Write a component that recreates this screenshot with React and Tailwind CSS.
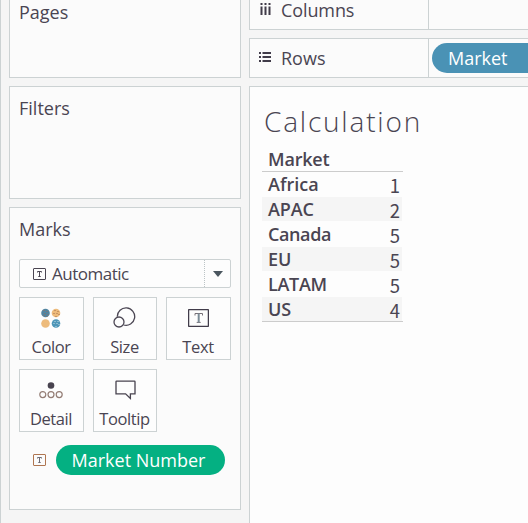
import React from 'react';

const rows = [
  ['Africa', 1, 'tracking-[0px]'],
  ['APAC', 2, 'tracking-[-0.1px]'],
  ['Canada', 5, 'tracking-[-0.4px]'],
  ['EU', 5, 'tracking-[0px]'],
  ['LATAM', 5, 'tracking-[-0.3px]'],
  ['US', 4, 'tracking-[0px]'],
];

function TextGlyph({ color, inner }) {
  return (
    <svg width="13" height="12" viewBox="0 0 13 12" fill="none" stroke={color}>
      <rect x="0.5" y="0.5" width="12" height="11" rx="0.5" />
      <path d="M4.5 4.5V3.5h4v1M6.5 3.5v5M5.3 8.5h2.4" stroke={inner || color} />
    </svg>
  );
}

function ColorIcon() {
  return (
    <svg width="20" height="20" viewBox="0 0 20 20">
      <circle cx="4.5" cy="5" r="4.3" fill="#5284a0" />
      <path d="M3 2v1M6 3v1M4 5v1M7 6v1M3 7v1M6 8v1" stroke="#96705e" />
      <circle cx="15" cy="5" r="4.3" fill="#edbb7c" />
      <path d="M14 2v1M17 3v1M13 5v1M16 5v1M18 6v1M15 8v1" stroke="#a46e4c" />
      <circle cx="4.5" cy="15.5" r="4.3" fill="#edbb7c" />
      <circle cx="15" cy="15.5" r="4.3" fill="#4e96b8" />
      <path d="M14 13v1M17 13v1M13 15v1M16 15v1M18 16v1M15 18v1" stroke="#c5dce6" />
    </svg>
  );
}

function SizeIcon() {
  return (
    <svg width="24" height="22" viewBox="0 0 24 22" fill="none" stroke="#4c4754" strokeWidth="1.3">
      <path d="M4.3 9.8A8.7 8.7 0 1 1 10.6 18" />
      <circle cx="6" cy="15" r="5" />
    </svg>
  );
}

function TextIcon() {
  return (
    <svg width="21" height="18" viewBox="0 0 21 18" fill="none">
      <rect x="0.6" y="0.6" width="19.8" height="16.8" rx="0.5" stroke="#413c4a" strokeWidth="1.3" />
      <path d="M7 6.5V4.5h7.5v2M8.7 13.4h4" stroke="#777077" />
      <path d="M10.7 4.5v9" stroke="#7b8b96" strokeWidth="2" />
    </svg>
  );
}

function DetailIcon() {
  return (
    <svg width="24" height="17" viewBox="0 0 24 17" fill="none" stroke="#947d75" strokeWidth="1.2">
      <circle cx="12" cy="3.5" r="3.3" fill="#48434f" stroke="none" />
      <circle cx="3.8" cy="12.6" r="3" />
      <circle cx="12" cy="12.6" r="3" />
      <circle cx="20.2" cy="12.6" r="3" />
    </svg>
  );
}

function TooltipIcon() {
  return (
    <svg width="21" height="20" viewBox="0 0 21 20" fill="none" stroke="#48434f" strokeWidth="1.3">
      <path d="M1.6 1.1h17.8a.6.6 0 0 1 .6.6v12.1h-4.6v4.6l-4.8-4.6H1V1.7a.6.6 0 0 1 .6-.6z" />
    </svg>
  );
}

function MarkButton({ icon, label, className, iconClass }) {
  return (
    <button className={'flex h-[63px] flex-col items-center border border-[#ccd2d3] bg-[#fdfdfd] ' + className}>
      <span className={'flex h-[37px] shrink-0 items-start justify-center ' + iconClass}>{icon}</span>
      <span className="pr-[1px] text-[16.5px] leading-[24px] tracking-[-0.4px] whitespace-nowrap">{label}</span>
    </button>
  );
}

function Card({ title, className, children }) {
  return (
    <section className={'w-[232px] shrink-0 border border-[#ccd2d3] bg-[#fbfbfb] px-[9px] ' + className}>
      <h2 className="text-[18px] leading-[24px] font-normal">{title}</h2>
      {children}
    </section>
  );
}

export default function App() {
  return (
    <div className="flex h-[523px] w-[528px] overflow-hidden bg-[#f5f5f5] font-['Open_Sans','Noto_Sans',sans-serif] font-normal text-[#4a4552]">
      <aside className="flex w-[249px] shrink-0 flex-col gap-2 border-l border-[#ccd2d3] pl-2">
        <Card title="Pages" className="h-[78px] border-t-0" />
        <Card title="Filters" className="h-[113px] pt-[9px]" />
        <Card title="Marks" className="h-[303px] pt-[9px]">
          <div className="mt-[18px] flex h-[29px] w-[212px] items-center rounded-[2px] border border-[#ccd2d3] bg-[#fdfdfd]">
            <span className="ml-[13px]"><TextGlyph color="#4b4652" /></span>
            <span className="ml-[6px] text-[17px] leading-[27px] tracking-[-0.5px]">Automatic</span>
            <span className="ml-auto flex h-[27px] w-[26px] items-center justify-center border-l border-dotted border-[#bcc4c6]">
              <svg width="10" height="6" viewBox="0 0 10 6" fill="#4b565f"><path d="M0 0h10L5 6z" /></svg>
            </span>
          </div>
          <div className="mt-[9px] grid w-[212px] grid-cols-[65px_64px_65px] gap-[9px]">
            <MarkButton icon={<ColorIcon />} label="Color" className="w-[65px]" iconClass="pt-[10px] pr-[2px]" />
            <MarkButton icon={<SizeIcon />} label="Size" className="w-[64px]" iconClass="pt-[9px]" />
            <MarkButton icon={<TextIcon />} label="Text" className="w-[65px]" iconClass="pt-[11px] pr-[1px]" />
            <MarkButton icon={<DetailIcon />} label="Detail" className="w-[65px]" iconClass="pt-[12px] pr-[1px]" />
            <MarkButton icon={<TooltipIcon />} label="Tooltip" className="w-[64px]" iconClass="pt-[10px]" />
          </div>
          <div className="mt-[13px] ml-[14px] flex h-[30px] items-center gap-[10px]">
            <TextGlyph color="#af7550" inner="#6e6c75" />
            <span className="flex h-[30px] w-[169px] items-center justify-center rounded-full bg-[#04b082] pr-[4px] text-[18px] whitespace-nowrap text-white">Market Number</span>
          </div>
        </Card>
      </aside>

      <main className="flex min-w-0 flex-1 flex-col gap-2">
        <div className="flex h-[30px] shrink-0 border-b border-l border-[#ccd2d3] bg-[#fbfbfb]">
          <div className="flex w-[179px] shrink-0 border-r border-[#ccd2d3] pl-[10px]">
            <svg className="mt-[3px] shrink-0" width="12" height="13" viewBox="0 0 12 13" stroke="#403b49" strokeWidth="2">
              <path d="M1.5 0v2M5.5 0v2M9.5 0v2M1.5 3.5v8.5M5.5 3.5v8.5M9.5 3.5v8.5" />
            </svg>
            <span className="ml-[9px] text-[18px] leading-[21px] tracking-[-0.1px]">Columns</span>
          </div>
        </div>
        <div className="flex h-[40px] shrink-0 items-center overflow-hidden border-y border-l border-[#ccd2d3] bg-[#fbfbfb]">
          <div className="flex h-full w-[179px] shrink-0 items-center border-r border-[#ccd2d3] pl-[9px]">
            <svg className="shrink-0" width="13" height="12" viewBox="0 0 13 12" stroke="#403b49" strokeWidth="2">
              <path d="M0 1h2M0 5h2M0 9h2M3.5 1H12M3.5 5H12M3.5 9H12" />
            </svg>
            <span className="ml-[9px] text-[18px] leading-[24px]">Rows</span>
          </div>
          <span className="ml-[3px] flex h-[30px] w-[120px] shrink-0 items-center rounded-l-full bg-[#4a92b5] pl-[16px] text-[18px] text-white">Market</span>
        </div>
        <section className="flex flex-1 flex-col border-t border-l border-[#ccd2d3] bg-[#fdfdfd] pl-[12px]">
          <h1 className="mt-[12px] ml-[2px] h-[45px] text-[28px] leading-[44px] font-light tracking-[1.8px]">Calculation</h1>
          <div className="mt-[3px] w-[141px] border-b border-[#ccc] text-[18px]">
            <div className="h-[25px] border-b border-[#ccc] pl-[6px] leading-[24px] font-semibold tracking-[-0.2px]">Market</div>
            {rows.map(([name, value, tracking], i) => (
              <div
                key={name}
                className={'mr-px flex h-[25px] items-start justify-between border-b border-[#fdfdfd] pr-[2px] pl-[6px] last:h-[24px] last:border-b-0 ' + (i % 2 ? 'bg-[#f5f5f5]' : '')}
              >
                <span className={'leading-[25px] font-semibold ' + tracking}>{name}</span>
                <span className="h-[24px] font-['Noto_Sans_CJK_SC','Noto_Sans',sans-serif] text-[18.5px] leading-[26px] font-normal">{value}</span>
              </div>
            ))}
          </div>
        </section>
      </main>
    </div>
  );
}
